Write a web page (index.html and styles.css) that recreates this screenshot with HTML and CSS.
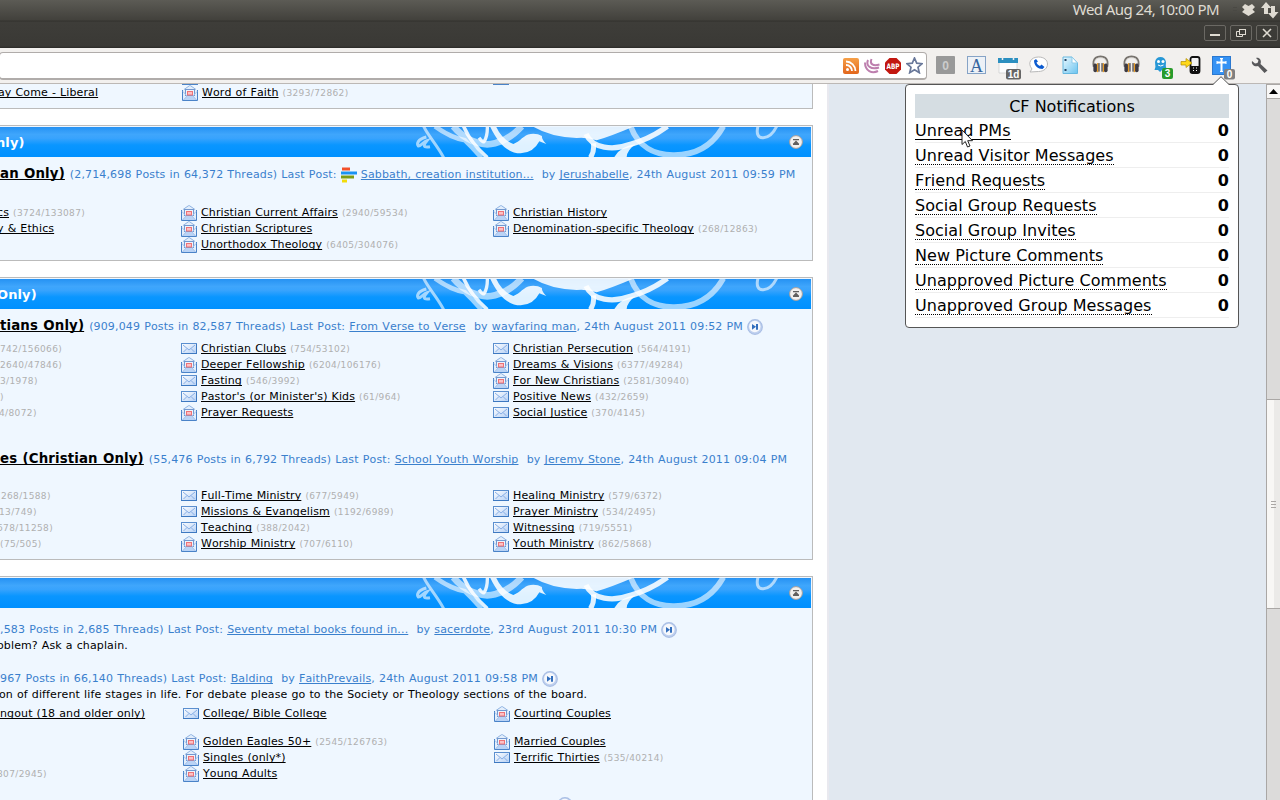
FILE: index.html
```html
<!DOCTYPE html>
<html lang="en">
<head>
<meta charset="utf-8">
<title>CF Notifications</title>
<link rel="stylesheet" href="styles.css">
</head>
<body>
<svg class="defs" width="0" height="0">
  <defs>
    <linearGradient id="paper" x1="0" y1="0" x2="1" y2="1"><stop offset="0" stop-color="#fff"/><stop offset="1" stop-color="#b5d0f5"/></linearGradient>
    <linearGradient id="rssg" x1="0" y1="0" x2="0" y2="1"><stop offset="0" stop-color="#f6a048"/><stop offset="1" stop-color="#e2661c"/></linearGradient>
    <linearGradient id="doc" x1="0" y1="0" x2="1" y2="1"><stop offset="0" stop-color="#e9f8ff"/><stop offset="1" stop-color="#6cc4ef"/></linearGradient>
    <symbol id="closed" viewBox="0 0 16 16">
      <rect x=".5" y="2.500" width="15" height="10" fill="url(#paper)" stroke="#5b8fcf"/>
      <path d="M0 12.500H16M15.500 3V12" stroke="#3d78c0"/>
      <path d="M2 4L8 9L14 4M2.500 11L6 7.500M13.500 11L10 7.500" fill="none" stroke="#86aee6"/>
    </symbol>
    <symbol id="open" viewBox="0 0 16 16">
      <path d="M.5 5.500L7.500 .5H8.500L15.500 5.500V15.500H.5Z" fill="#e3eefb"/>
      <path d="M2 4.500L7.500 .7H8.500L14 4.500" fill="none" stroke="#8fb3e2"/>
      <path d="M1 15L6 10.500H10L15 15Z" fill="#b9d3f6"/>
      <path d="M.5 5V15.500H15.500V5" fill="none" stroke="#4a83c8"/>
      <rect x="3.500" y="4.500" width="9" height="6" fill="#edf4fd" stroke="#7398cf"/>
      <rect x="5.500" y="6.500" width="5" height="3.500" fill="#fbc0c4" stroke="#ee7377"/>
      <path d="M1 6.500L5 11L1.500 15M15 6.500L11 11L14.500 15" fill="none" stroke="#a3c2ec"/>
    </symbol>
    <symbol id="last" viewBox="0 0 16 16">
      <circle cx="8" cy="8" r="7.300" fill="#c0d1ef" stroke="#aabfe5" stroke-width="1.200"/>
      <circle cx="7.800" cy="7.500" r="5.700" fill="#f6f8fc"/>
      <path d="M5 5L9 7.800L5 10.700ZM9 5H11V10.700H9Z" fill="#336fbd"/>
    </symbol>
    <symbol id="collapse" viewBox="0 0 14 14">
      <circle cx="7" cy="7" r="6.400" fill="#f3f1ef" stroke="#a79d9a" stroke-width="1"/>
      <path d="M4 4H10V5.300H4ZM7 5.500L10.300 9H3.700ZM4 8.700H10V10H4Z" fill="#62605f"/>
    </symbol>
    <symbol id="swirl" viewBox="0 141 1233 90">
      <g fill="none" stroke="#fff" stroke-opacity=".6">
        <path d="M79 171C52 178 50 192 55 198C61 200 72 184 81 182C70 196 68 204 90 200" stroke-width="9"/>
        <path d="M71 139C86 170 112 196 131 233" stroke-width="9"/>
        <path d="M105 139Q150 172 195 181Q220 205 244 233" stroke-width="14"/>
        <path d="M160 139C190 175 238 202 285 190Q330 178 365 139" stroke-width="20"/>
        <path d="M692 139C714 200 764 226 823 225C888 225 936 200 970 139" stroke-width="17"/>
        <path d="M1074 139C1068 160 1074 175 1090 173Q1114 172 1130 139" stroke-width="9"/>
      </g>
      <g fill="none" stroke="#fff" stroke-opacity=".87">
        <path d="M191 139Q211 188 262 233" stroke-width="11"/>
        <path d="M262 139Q263 169 252 185Q247 187 237 173" stroke-width="10"/>
        <path d="M580 190Q584 215 571 233" stroke-width="15"/>
        <path d="M558 162C578 207 640 212 691 193Q750 177 802 139" stroke-width="16"/>
      </g>
      <g fill="#fff" fill-opacity=".87">
        <path d="M270 139H288Q305 178 340 192C362 184 370 165 392 162Q412 160 426 168Q424 178 439 192L418 184Q400 219 362 220C320 219 294 188 270 139Z"/>
        <path d="M398 139Q450 171 530 174Q560 171 590 181Q640 166 702 139Z"/>
        <path d="M643 231Q662 198 706 193Q682 210 680 231Z"/>
      </g>
    </symbol>
    <symbol id="phones" viewBox="0 0 20 20">
      <path d="M3 12C1 1 8 1 10 1S19 1 17 12" fill="none" stroke="#77736e" stroke-width="2.200"/>
      <path d="M3.500 8C4 3 8 2.500 10 2.500S16 3 16.500 8" fill="none" stroke="#d6d3cf" stroke-width=".8"/>
      <rect x="2.500" y="8.500" width="4" height="9" rx="2" fill="#3d3b44"/><rect x="13.500" y="8.500" width="4" height="9" rx="2" fill="#3d3b44"/>
      <rect x="6.200" y="8" width="1.500" height="9.500" fill="#e79b27"/><rect x="12.300" y="8" width="1.500" height="9.500" fill="#e79b27"/>
      <rect x="7.800" y="8" width="1.200" height="9" fill="#39373e"/><rect x="11" y="8" width="1.200" height="9" fill="#39373e"/>
    </symbol>
  </defs>
</svg>

<header class="panel-bar">
  <span class="clock">Wed Aug 24, 10:00 PM</span>
  <svg class="tray" width="46" height="20" viewBox="0 0 46 20">
    <path d="M0 7.500H4M0 10.500H4M0 13.500H4" stroke="#4a4944"/>
    <path d="M12 4L15.500 6L19 4L22 7L19.500 9.500L22 12L15.500 16L9 12L11.500 9.500L9 7Z" fill="#dfdbd2"/>
    <path d="M33 2L38.500 8H35V14H31V8H28Z M38 6H42V12H45.500L40 18.500L35 13H38Z" fill="#dfdbd2"/>
  </svg>
</header>
<div class="title-bar">
  <svg width="74" height="18" viewBox="0 0 74 18">
    <g fill="none" stroke="#6b6964"><rect x=".5" y="1.500" width="21" height="15" rx="1.500"/><rect x="26.500" y="1.500" width="21" height="15" rx="1.500"/><rect x="52.500" y="1.500" width="21" height="15" rx="1.500"/></g>
    <path d="M6 11H16" stroke="#dfdbd2" stroke-width="2"/>
    <g fill="none" stroke="#dfdbd2"><rect x="35.500" y="5.500" width="6" height="5"/><path d="M35 7.500H32.500V12.500H38.500V10.500"/></g>
    <path d="M59 5L67 13M67 5L59 13" stroke="#dfdbd2" stroke-width="1.600"/>
  </svg>
</div>
<div class="toolbar">
  <div class="address">
    <svg width="16" height="16" viewBox="0 0 16 16"><rect width="16" height="16" rx="2" fill="url(#rssg)"/><circle cx="4.500" cy="11.500" r="1.500" fill="#fff"/><path d="M3 7A6 6 0 0 1 9 13M3 3.500A9.500 9.500 0 0 1 12.500 13" fill="none" stroke="#fff" stroke-width="1.800"/></svg>
    <svg width="16" height="16" viewBox="0 0 16 16"><g fill="none" stroke="#bd7fae" stroke-width="2"><path d="M7.500 1C5.500 6 9 8.500 15.500 6.500"/><path d="M4 2C1.500 8 7 12 15 9.500"/><path d="M1 4.500C1 13 8 16 14 13"/></g></svg>
    <svg width="16" height="16" viewBox="0 0 16 16"><path d="M4.500 0H11.500L16 4.500V11.500L11.500 16H4.500L0 11.500V4.500Z" fill="#c2170f"/><text x="8" y="11" class="abp" textLength="13" lengthAdjust="spacingAndGlyphs">ABP</text></svg>
    <svg width="17" height="17" viewBox="0 0 17 17"><path d="M8.500 1L10.700 6.200L16 6.700L12 10.200L13.300 15.700L8.500 12.800L3.700 15.700L5 10.200L1 6.700L6.300 6.200Z" fill="#fff" stroke="#69789a" stroke-width="1.700"/></svg>
  </div>
  <div class="extensions">
    <svg width="19" height="20" viewBox="0 0 19 20"><rect y="1" width="19" height="18" rx="1" fill="#999"/><text x="9.500" y="14.500" class="zero">0</text></svg>
    <svg width="19" height="20" viewBox="0 0 19 20"><rect x=".5" y="1.500" width="18" height="17" fill="#edf1f6" stroke="#86a3c6"/><text x="9.500" y="16.500" class="letter">A</text></svg>
    <svg width="19" height="20" viewBox="0 0 19 20"><path d="M1 6H19V18H1Z" fill="#fbfcfd" stroke="#ccc" stroke-width=".7"/><path d="M0 3H20V8H0Z" fill="#2b8fc0"/><path d="M4.500 1V5M15.500 1V5" stroke="#eee" stroke-width="1.500"/><rect x="8" y="14" width="15" height="10.500" rx="2" fill="#666"/><text x="15.500" y="22.500" class="badge">1d</text></svg>
    <svg width="19" height="20" viewBox="0 0 19 20"><path d="M9.500 2C15 2 18.500 5 18.500 9S15 16.500 9.500 16.500L1 17L3 14C-2 8 2 2 9.500 2Z" fill="#fff" stroke="#b9b9b9"/><path d="M7 4L5 5.500C5 10.500 9 14 13.500 14L15.500 12L12.500 9.500L11 11C9 10 8 9 7.500 7.500L9 6.500Z" fill="#0c5bd0"/></svg>
    <svg width="19" height="20" viewBox="0 0 19 20"><path d="M3 2H12L17.500 8V18.500H3Z" fill="url(#doc)" stroke="#67b8e0"/><path d="M12 2V8H17.500Z" fill="#fff" stroke="#8ecbe9"/><path d="M5.500 4V6M5.500 14V16" stroke="#246" stroke-width="2"/></svg>
    <svg width="19" height="20"><use href="#phones" width="19" height="20"/></svg>
    <svg width="19" height="20"><use href="#phones" width="19" height="20"/></svg>
    <svg width="19" height="20" viewBox="0 0 19 20"><path d="M1.500 15Q3 12 2 7Q3 2 7.500 2T13 7Q12 11 14 16L10 14L7 17L5 15Z" fill="#2898d6"/><circle cx="5.500" cy="6.500" r="1.500" fill="#fff"/><circle cx="10" cy="6.500" r="1.500" fill="#fff"/><path d="M5 10Q7.500 12 10.500 10" stroke="#fff" fill="none"/><rect x="9" y="13" width="11" height="11" rx="2" fill="#289b2b"/><text x="14.500" y="22" class="badge">3</text></svg>
    <svg class="to-phone" width="19" height="20" viewBox="0 0 19 20"><rect x="9.500" y="2" width="9" height="16" rx="2" fill="#f3f3f3" stroke="#111" stroke-width="1.800"/><rect x="10" y="11" width="8" height="7" fill="#111"/><path d="M12 13H13M15 13H16M12 15.500H13M15 15.500H16" stroke="#fff"/><path d="M0 6.500H5V3.500L11 8L5 12.500V10H0Z" fill="#ffd91a" stroke="#b28e00" stroke-width=".7"/></svg>
    <svg class="cross" width="19" height="20" viewBox="0 0 19 20"><rect x=".5" y="1.500" width="18" height="18" fill="#3592f4" stroke="#2a78d0"/><path d="M9.500 3V17M5 7.500H14" stroke="#fff" stroke-width="2"/><path d="M8 3.500H11M8 16.500H11M5 6V9M14 6V9" stroke="#fff"/><rect x="12" y="14" width="11" height="10.500" rx="2" fill="#808080"/><text x="17.500" y="22.500" class="badge">0</text></svg>
    <svg class="wrench" width="17" height="18" viewBox="0 0 17 18"><path d="M5 1L7.500 3.500L6.500 6L4 6.500L1 4C0 8 4 10 7 9L13.500 16L16.500 13.500L9.500 7C11 3 8 0 5 1Z" fill="#58585a"/></svg>
  </div>
</div>

<div class="viewport">
  <main class="page">
    <section class="board first">
      <div class="row"><div class="cut2"><a>ay Come - Liberal</a></div><div><svg class="ic"><use href="#open"/></svg><a>Word of Faith</a> <small>(3293/72862)</small></div><div></div></div>
      <i class="tab t1"></i><i class="tab t2"></i>
    </section>

    <section class="board">
      <h2><span class="s1">nly)</span><svg class="sw"><use href="#swirl"/></svg><svg class="col"><use href="#collapse"/></svg></h2>
      <div class="forum"><a class="name">an Only)</a> <p>(2,714,698 Posts in 64,372 Threads) Last Post: <svg class="bars" viewBox="0 0 16 16"><path d="M1 2H9" stroke="#f2502a" stroke-width="3"/><path d="M0 6H16" stroke="#1b93f3" stroke-width="3"/><path d="M0 10H13" stroke="#7e9c14" stroke-width="3"/><path d="M1 14H6" stroke="#f2dc0c" stroke-width="3"/></svg> <a>Sabbath, creation institution...</a> &nbsp;by <a>Jerushabelle</a>, 24th August 2011 09:59 PM</p></div>
      <div class="rows gap">
        <div class="row"><div class="cut3"><a>cs</a> <small>(3724/133087)</small></div><div><svg class="ic"><use href="#open"/></svg><a>Christian Current Affairs</a> <small>(2940/59534)</small></div><div><svg class="ic"><use href="#open"/></svg><a>Christian History</a></div></div>
        <div class="row"><div class="cut3"><a>y &amp; Ethics</a></div><div><svg class="ic"><use href="#open"/></svg><a>Christian Scriptures</a></div><div><svg class="ic"><use href="#open"/></svg><a>Denomination-specific Theology</a> <small>(268/12863)</small></div></div>
        <div class="row"><div></div><div><svg class="ic"><use href="#open"/></svg><a>Unorthodox Theology</a> <small>(6405/304076)</small></div><div></div></div>
      </div>
    </section>

    <section class="board">
      <h2><span class="s2">Only)</span><svg class="sw"><use href="#swirl"/></svg><svg class="col"><use href="#collapse"/></svg></h2>
      <div class="forum"><a class="name">tians Only)</a> <p>(909,049 Posts in 82,587 Threads) Last Post: <a>From Verse to Verse</a> &nbsp;by <a>wayfaring man</a>, 24th August 2011 09:52 PM <svg class="go"><use href="#last"/></svg></p></div>
      <div class="rows">
        <div class="row"><div><small>742/156066)</small></div><div><svg class="ic"><use href="#closed"/></svg><a>Christian Clubs</a> <small>(754/53102)</small></div><div><svg class="ic"><use href="#closed"/></svg><a>Christian Persecution</a> <small>(564/4191)</small></div></div>
        <div class="row"><div><small>2640/47846)</small></div><div><svg class="ic"><use href="#open"/></svg><a>Deeper Fellowship</a> <small>(6204/106176)</small></div><div><svg class="ic"><use href="#open"/></svg><a>Dreams &amp; Visions</a> <small>(6377/49284)</small></div></div>
        <div class="row"><div><small>3/1978)</small></div><div><svg class="ic"><use href="#closed"/></svg><a>Fasting</a> <small>(546/3992)</small></div><div><svg class="ic"><use href="#open"/></svg><a>For New Christians</a> <small>(2581/30940)</small></div></div>
        <div class="row"><div><small>)</small></div><div><svg class="ic"><use href="#closed"/></svg><a>Pastor's (or Minister's) Kids</a> <small>(61/964)</small></div><div><svg class="ic"><use href="#closed"/></svg><a>Positive News</a> <small>(432/2659)</small></div></div>
        <div class="row"><div class="cut1"><small>4/8072)</small></div><div><svg class="ic"><use href="#open"/></svg><a>Prayer Requests</a></div><div><svg class="ic"><use href="#closed"/></svg><a>Social Justice</a> <small>(370/4145)</small></div></div>
      </div>
      <div class="forum second"><a class="name">es (Christian Only)</a> <p>(55,476 Posts in 6,792 Threads) Last Post: <a>School Youth Worship</a> &nbsp;by <a>Jeremy Stone</a>, 24th August 2011 09:04 PM</p></div>
      <div class="rows gap">
        <div class="row"><div class="cut3"><small>(268/1588)</small></div><div><svg class="ic"><use href="#closed"/></svg><a>Full-Time Ministry</a> <small>(677/5949)</small></div><div><svg class="ic"><use href="#closed"/></svg><a>Healing Ministry</a> <small>(579/6372)</small></div></div>
        <div class="row"><div class="cut1"><small>13/749)</small></div><div><svg class="ic"><use href="#closed"/></svg><a>Missions &amp; Evangelism</a> <small>(1192/6989)</small></div><div><svg class="ic"><use href="#closed"/></svg><a>Prayer Ministry</a> <small>(534/2495)</small></div></div>
        <div class="row"><div class="cut3"><small>678/11258)</small></div><div><svg class="ic"><use href="#closed"/></svg><a>Teaching</a> <small>(388/2042)</small></div><div><svg class="ic"><use href="#closed"/></svg><a>Witnessing</a> <small>(719/5551)</small></div></div>
        <div class="row"><div><small>(75/505)</small></div><div><svg class="ic"><use href="#open"/></svg><a>Worship Ministry</a> <small>(707/6110)</small></div><div><svg class="ic"><use href="#open"/></svg><a>Youth Ministry</a> <small>(862/5868)</small></div></div>
      </div>
    </section>

    <section class="board last">
      <h2><svg class="sw"><use href="#swirl"/></svg><svg class="col"><use href="#collapse"/></svg></h2>
      <div class="forum bare"><p>,583 Posts in 2,685 Threads) Last Post: <a>Seventy metal books found in...</a> &nbsp;by <a>sacerdote</a>, 23rd August 2011 10:30 PM <svg class="go"><use href="#last"/></svg></p></div>
      <div class="desc cut3">oblem? Ask a chaplain.</div>
      <div class="forum bare next"><p>967 Posts in 66,140 Threads) Last Post: <a>Balding</a> &nbsp;by <a>FaithPrevails</a>, 24th August 2011 09:58 PM <svg class="go"><use href="#last"/></svg></p></div>
      <div class="desc cut1">on of different life stages in life. For debate please go to the Society or Theology sections of the board.</div>
      <div class="rows r3">
        <div class="row tall"><div><a>ngout (18 and older only)</a></div><div><svg class="ic"><use href="#closed"/></svg><a>College/ Bible College</a></div><div><svg class="ic"><use href="#open"/></svg><a>Courting Couples</a></div></div>
        <div class="row"><div></div><div><svg class="ic"><use href="#open"/></svg><a>Golden Eagles 50+</a> <small>(2545/126763)</small></div><div><svg class="ic"><use href="#open"/></svg><a>Married Couples</a></div></div>
        <div class="row"><div></div><div><svg class="ic"><use href="#open"/></svg><a>Singles (only*)</a></div><div><svg class="ic"><use href="#closed"/></svg><a>Terrific Thirties</a> <small>(535/40214)</small></div></div>
        <div class="row"><div class="cut3"><small>807/2945)</small></div><div><svg class="ic"><use href="#open"/></svg><a>Young Adults</a></div><div></div></div>
      </div>
      <svg class="go peek"><use href="#last"/></svg>
    </section>
  </main>
  <div class="scrollbar">
    <div class="up"><svg width="9" height="5"><path d="M4.500 0L9 5H0Z"/></svg></div>
    <div class="thumb"><i></i><i></i><i></i></div>
  </div>
</div>

<aside class="popup">
  <svg class="tip" width="18" height="10" viewBox="0 0 18 10"><path d="M1 8.500L9 .7L17 8.500V10H1Z" fill="#fff"/><path d="M0 8.500H1L9 .7L17 8.500H18" fill="none" stroke="#555"/></svg>
  <h1>CF Notifications</h1>
  <ul>
    <li><a class="hover">Unread PMs</a><b>0</b></li>
    <li><a>Unread Visitor Messages</a><b>0</b></li>
    <li><a>Friend Requests</a><b>0</b></li>
    <li><a>Social Group Requests</a><b>0</b></li>
    <li><a>Social Group Invites</a><b>0</b></li>
    <li><a>New Picture Comments</a><b>0</b></li>
    <li><a>Unapproved Picture Comments</a><b>0</b></li>
    <li><a>Unapproved Group Messages</a><b>0</b></li>
  </ul>
</aside>
<svg class="cursor" width="13" height="20" viewBox="0 0 13 20"><path d="M1 1V15.500L4.300 12.500L6.500 18L9 17L6.700 11.700H11.500Z" fill="#fff" stroke="#222"/></svg>
</body>
</html>
```
FILE: styles.css
```css
* { box-sizing: border-box; }
body {
  margin: 0;
  width: 1280px;
  height: 800px;
  overflow: hidden;
  position: relative;
  font: 11px/16px "DejaVu Sans", sans-serif;
  font-kerning: none;
  color: #000;
}
.defs { position: absolute; }

.panel-bar {
  height: 22px;
  padding-right: 1px;
  display: flex;
  justify-content: flex-end;
  align-items: flex-start;
  gap: 14px;
  background: linear-gradient(#5c5b55, #42413c 20px, #33322e 21px, #3c3b37);
}
.clock {
  font: 15px/19px "Noto Sans", sans-serif;
  letter-spacing: -.55px;
  color: #dfdbd2;
  white-space: nowrap;
}
.title-bar {
  height: 26px;
  padding: 0 2px 4px 0;
  display: flex;
  justify-content: flex-end;
  align-items: center;
  background: linear-gradient(#3e3d39, #3a3935 24px, #2a2926);
}
.toolbar {
  height: 36px;
  display: flex;
  align-items: flex-start;
  background: #f2f0ee;
  border-bottom: 1px solid #bcb8b5;
}
.address {
  width: 928px;
  height: 28px;
  margin: 4px 0 0 -1px;
  padding: 0 3px 0 0;
  display: flex;
  justify-content: flex-end;
  align-items: center;
  gap: 5px;
  background: #fff;
  border: 2px solid #b0acaa;
  border-width: 1px 1px 2px;
  border-radius: 4px;
}
.extensions {
  display: flex;
  gap: 12px;
  margin: 7px 0 0 9px;
}
.extensions svg { overflow: visible; }
.extensions .to-phone { margin-left: -3px; }
.extensions .wrench { margin: 2px 0 0 8px; }
.abp { font: bold 7.5px "DejaVu Sans", sans-serif; fill: #fff; text-anchor: middle; }
.zero { font: bold 12px "Liberation Sans", sans-serif; fill: #ccc; text-anchor: middle; }
.letter { font: 18px "Liberation Serif", serif; fill: #35659f; text-anchor: middle; }
.badge { font: bold 10px "Liberation Sans", sans-serif; fill: #fff; text-anchor: middle; }

.viewport {
  height: 716px;
  display: flex;
  justify-content: space-between;
  background: #e1e8f0;
}
.page {
  width: 829px;
  height: 716px;
  overflow: hidden;
  background: #fff;
  border-right: 2px solid #e9e9ef;
  letter-spacing: .12px;
  word-spacing: .4px;
}
.board {
  width: 813px;
  margin-bottom: 16px;
  padding-bottom: 8px;
  border: 1px solid #bbb;
  border-left: 0;
  background: #eff7ff;
  white-space: nowrap;
}
.board.first { position: relative; height: 25px; border-top: 0; padding: 0; }
.board.last { height: 300px; position: relative; }
.board h2 {
  margin: 1px 1px 0 0;
  height: 30px;
  position: relative;
  display: flex;
  align-items: center;
  font: bold 13px/28px "DejaVu Sans", sans-serif;
  color: #fff;
  background: linear-gradient(#2692f3, #3fa6fc 25%, #38a3fd 38%, #0a96ff 60%, #0090ff);
}
.board h2 span { padding-top: 2px; }
.s1 { margin-left: -4px; }
.s2 { margin-left: -3px; }
.sw { position: absolute; left: 400px; top: 0; width: 411px; height: 30px; }
.col { position: absolute; right: 8px; top: 8px; width: 14px; height: 14px; }
.forum {
  height: 31px;
  padding-top: 10px;
  display: flex;
  color: #3a80cd;
  letter-spacing: .14px;
  word-spacing: .45px;
}
.forum p { margin: 0 0 0 5px; }
.forum a, .row a { text-decoration: underline; text-decoration-skip-ink: none; text-underline-offset: 1px; text-decoration-thickness: 1px; }
.forum .name {
  margin-top: -1px;
  font: bold 13.333px/16px "DejaVu Sans", sans-serif;
  color: #000;
}
.forum.second { margin-top: 22px; height: 29px; }
.forum.bare { padding-top: 14px; height: 30px; }
.forum.bare p { margin-left: 0; }
.forum.bare.next { margin-top: 4px; padding-top: 13px; height: 29px; }
.rows.gap { padding-top: 16px; }
.row {
  display: grid;
  grid-template-columns: 181px 312px 1fr;
  height: 16px;
  padding-top: 1px;
}
.first .row { grid-template-columns: 182px 311px 1fr; }
.r3 .row { grid-template-columns: 183px 311px 1fr; }
.rows.r3 { padding-top: 2px; }
.r3 .row.tall { height: 28px; }
.row > div { height: 16px; overflow: visible; }
small { font-size: 9px; letter-spacing: .37px; color: #b0b0b0; }
.ic { width: 16px; height: 16px; margin-right: 4px; vertical-align: -5px; }
.bars, .go { width: 16px; height: 16px; vertical-align: -5px; }
.cut1 { margin-left: -1px; }
.cut2 { margin-left: -2px; }
.cut3 { margin-left: -3px; }
.tab { position: absolute; top: 0; width: 16px; height: 1px; background: #4a83c8; }
.t1 { left: 182px; }
.t2 { left: 493px; }
.peek { position: absolute; left: 557px; top: 220px; }

.scrollbar {
  width: 14px;
  border-left: 1px solid #aaa7a5;
  background: #dcdbda;
}
.up {
  height: 15px;
  display: flex;
  align-items: center;
  justify-content: center;
  background: #f8f7f6;
  border: solid #aaa7a5;
  border-width: 1px 0;
}
.thumb {
  height: 210px;
  margin-top: 300px;
  display: flex;
  flex-direction: column;
  align-items: center;
  justify-content: center;
  gap: 2px;
  background: linear-gradient(90deg, #f8f7f5 7px, #ebeae8 7px);
  border: solid #aaa7a5;
  border-width: 1px 0;
}
.thumb i { width: 5px; height: 1px; background: #aaa7a5; }

.popup {
  position: absolute;
  left: 905px;
  top: 84px;
  width: 334px;
  height: 244px;
  padding: 9px;
  background: #fff;
  border: 1px solid #555;
  border-radius: 4px;
}
.tip { position: absolute; left: 306px; top: -9px; }
.popup h1 {
  margin: 0;
  height: 24px;
  font: 16px/26px "DejaVu Sans", sans-serif;
  text-align: center;
  background: #d5dde2;
}
.popup ul { margin: 0; padding: 0; list-style: none; }
.popup li {
  height: 25px;
  padding-top: 3px;
  display: flex;
  justify-content: space-between;
  align-items: flex-start;
  font-size: 16px;
  line-height: 19px;
  border-bottom: 1px solid #eee;
}
.popup li a { height: 19px; border-bottom: 1px dotted #000; letter-spacing: .04px; }
.popup li a.hover { border-bottom-style: solid; }
.cursor { position: absolute; left: 961px; top: 129px; }
```
